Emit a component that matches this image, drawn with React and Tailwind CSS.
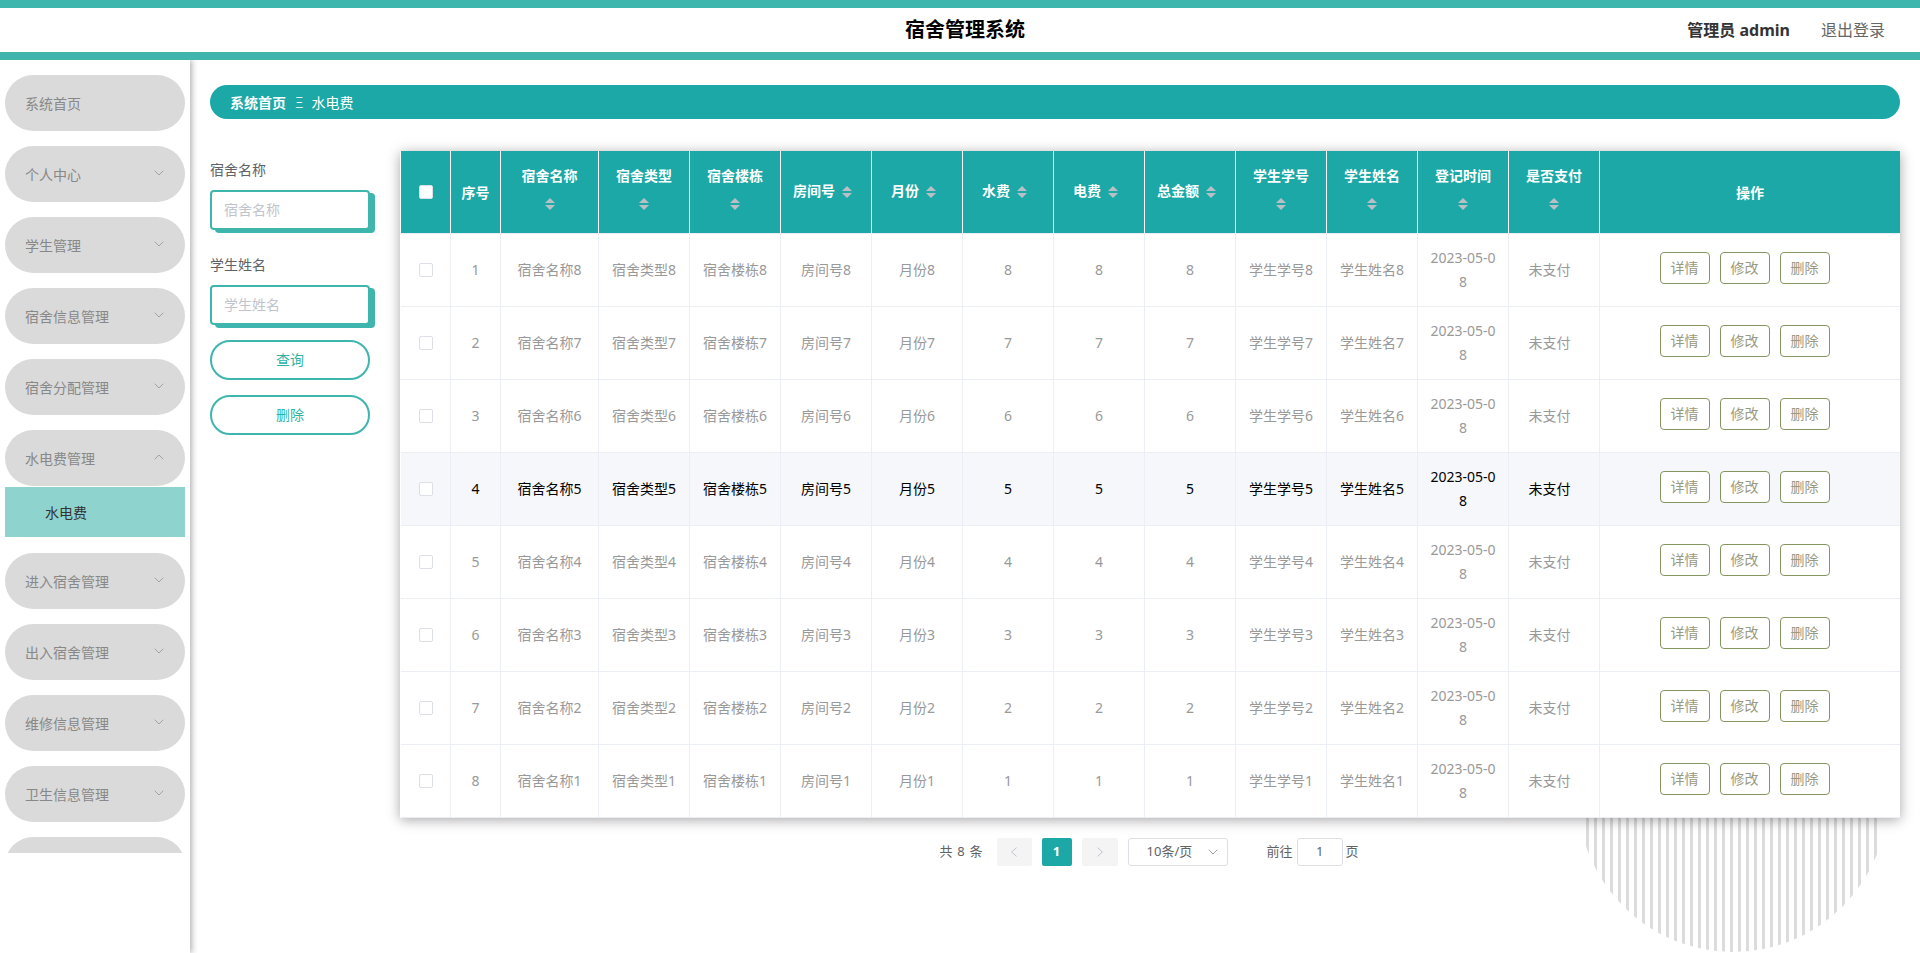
import React from "react";

const FONT = "font-['Noto_Sans','Noto_Sans_CJK_SC',sans-serif]";

function Chevron({ up, className = "" }) {
  return (
    <svg width="10" height="6" viewBox="0 0 10 6" fill="none" className={className}>
      <polyline points={up ? "0.7,5.3 5,1 9.3,5.3" : "0.7,0.7 5,5 9.3,0.7"} stroke="#a0a3a8" strokeWidth="1" />
    </svg>
  );
}

function MenuItem({ label, chevron, up }) {
  return (
    <div className="flex h-[56px] shrink-0 items-center justify-between rounded-[28px] bg-[#dadada] pl-[20px] pr-[21px] text-[14px] text-[#888888]">
      <span>{label}</span>
      {chevron && <Chevron up={up} className="mb-[3px]" />}
    </div>
  );
}

function Sidebar() {
  const before = ["个人中心", "学生管理", "宿舍信息管理", "宿舍分配管理"];
  const after = ["进入宿舍管理", "出入宿舍管理", "维修信息管理", "卫生信息管理"];
  return (
    <aside className="relative z-20 h-[893px] w-[190px] shrink-0 bg-white shadow-[2px_0_6px_rgba(0,0,0,0.3)]">
      <div className="flex h-[793px] flex-col gap-[15px] overflow-hidden px-[5px] pt-[15px]">
        <MenuItem label="系统首页" />
        {before.map((m) => (
          <MenuItem key={m} label={m} chevron />
        ))}
        <div className="mb-px shrink-0">
          <MenuItem label="水电费管理" chevron up />
          <div className="mt-px flex h-[50px] items-center bg-[#8fd3cf] pl-[40px] text-[14px] text-[#333333]">水电费</div>
        </div>
        {after.map((m) => (
          <MenuItem key={m} label={m} chevron />
        ))}
        <MenuItem label="" />
      </div>
    </aside>
  );
}

function Header() {
  return (
    <header className="relative z-30 flex h-[60px] items-center border-y-[8px] border-[#3eb5ad] bg-white">
      <div className="ml-[905px] text-[20px] font-bold leading-none text-black">宿舍管理系统</div>
      <div className="ml-auto mr-[35px] flex items-center gap-[31px] text-[16px]">
        <span className="font-bold text-[#333333]">管理员 admin</span>
        <span className="text-[#666666]">退出登录</span>
      </div>
    </header>
  );
}

function FormField({ label }) {
  return (
    <div className="mb-[15px]">
      <div className="h-[40px] text-[14px] leading-[40px] text-[#606266]">{label}</div>
      <div className="flex h-[40px] w-[160px] items-center rounded-[4px] border-2 border-[#3eb5ad] bg-white pb-[2px] pl-[12px] text-[14px] text-[#c0c4cc] shadow-[5px_3px_0_#3eb5ad]">
        {label}
      </div>
    </div>
  );
}

function Caret() {
  return (
    <span className="inline-flex h-[34px] w-[24px] flex-col items-center justify-center gap-[2px] align-middle">
      <span className="h-0 w-0 border-x-[5px] border-b-[5px] border-x-transparent border-b-[#b8bfc5]"></span>
      <span className="h-0 w-0 border-x-[5px] border-t-[5px] border-x-transparent border-t-[#b8bfc5]"></span>
    </span>
  );
}

const COLS = [
  ["宿舍名称", "宿舍名称", 98],
  ["宿舍类型", "宿舍类型", 91],
  ["宿舍楼栋", "宿舍楼栋", 91],
  ["房间号", "房间号", 91],
  ["月份", "月份", 91],
  ["水费", "", 91],
  ["电费", "", 91],
  ["总金额", "", 91],
  ["学生学号", "学生学号", 91],
  ["学生姓名", "学生姓名", 91],
];

function Table() {
  const rows = [8, 7, 6, 5, 4, 3, 2, 1];
  const th = "border-b border-r border-b-[#ebeef5] border-r-white px-[10px] text-center align-middle font-bold leading-[23px] text-white";
  const td = "h-[73px] border-b border-r border-[#ebeef5] px-[10px] text-center align-middle leading-[24px] break-all";
  return (
    <div className="bg-white pl-px shadow-[0_2px_12px_rgba(0,0,0,0.35)]">
      <table className="w-[1499px] table-fixed border-separate border-spacing-0 bg-white text-[14px]">
        <colgroup>
          <col className="w-[50px]" />
          <col className="w-[50px]" />
          {COLS.map(([h, , w]) => (
            <col key={h} style={{ width: w }} />
          ))}
          <col className="w-[91px]" />
          <col className="w-[91px]" />
          <col className="w-[300px]" />
        </colgroup>
        <thead>
          <tr className="h-[83px] bg-[#1ba8a6]">
            <th className={th}>
              <span className="mx-auto block h-[14px] w-[14px] rounded-[2px] border border-[#dcdfe6] bg-white"></span>
            </th>
            <th className={th + " px-0"}>序号</th>
            {COLS.map(([h]) => (
              <th key={h} className={th}>
                {h}
                <Caret />
              </th>
            ))}
            <th className={th}>
              登记时间
              <Caret />
            </th>
            <th className={th}>
              是否支付
              <Caret />
            </th>
            <th className={th + " border-r-0"}>操作</th>
          </tr>
        </thead>
        <tbody>
          {rows.map((n, i) => {
            const hover = i === 3;
            return (
              <tr key={n} className={hover ? "bg-[#f5f7fa] text-black" : "text-[#999999]"}>
                <td className={td}>
                  <span className="mx-auto block h-[14px] w-[14px] rounded-[2px] border border-[#dcdfe6] bg-white"></span>
                </td>
                <td className={td}>{i + 1}</td>
                {COLS.map(([h, prefix]) => (
                  <td key={h} className={td}>
                    {prefix}
                    {n}
                  </td>
                ))}
                <td className={td}>2023-05-08</td>
                <td className={td + " pr-[19px]"}>未支付</td>
                <td className={td + " border-r-0 pr-[21px]"}>
                  <div className="mb-[5px] flex justify-center gap-[10px]">
                    {["详情", "修改", "删除"].map((b) => (
                      <span
                        key={b}
                        className="flex h-[32px] w-[50px] items-center justify-center rounded-[4px] border border-[#84965f] bg-white text-[#9a9a80]"
                      >
                        {b}
                      </span>
                    ))}
                  </div>
                </td>
              </tr>
            );
          })}
        </tbody>
      </table>
    </div>
  );
}

function Arrow({ dir }) {
  return (
    <svg width="8" height="10" viewBox="0 0 8 10" fill="none">
      <polyline points={dir === "l" ? "6.5,0.7 1.5,5 6.5,9.3" : "1.5,0.7 6.5,5 1.5,9.3"} stroke="#c0c4cc" strokeWidth="1" />
    </svg>
  );
}

function Pagination() {
  return (
    <div className="mt-[20px] flex items-center justify-center pr-[2px] text-[13px] text-[#606266]">
      <span className="mr-[14px] whitespace-pre [word-spacing:1.5px]">共 8 条</span>
      <span className="flex h-[28px] w-[35px] items-center justify-center rounded-[2px] bg-[#f4f4f5]">
        <Arrow dir="l" />
      </span>
      <span className="mx-[10px] flex h-[28px] w-[30px] items-center justify-center rounded-[2px] bg-[#1ba8a6] font-bold text-white">1</span>
      <span className="flex h-[28px] w-[36px] items-center justify-center rounded-[2px] bg-[#f4f4f5]">
        <Arrow dir="r" />
      </span>
      <span className="ml-[10px] flex h-[28px] w-[100px] items-center justify-between rounded-[3px] border border-[#dcdfe6] bg-white pl-[18px] pr-[9px]">
        <span>10条/页</span>
        <Chevron />
      </span>
      <span className="ml-[39px]">前往</span>
      <span className="ml-[4px] mr-[3px] flex h-[28px] w-[46px] items-center justify-center rounded-[3px] border border-[#dcdfe6] bg-white">1</span>
      <span>页</span>
    </div>
  );
}

export default function App() {
  return (
    <div className={"relative h-[953px] w-full overflow-hidden bg-white " + FONT}>
      <div className="absolute left-[1584px] top-[642px] h-[310px] w-[294px] overflow-hidden">
        <div className="-ml-[6px] h-[310px] w-[310px] rounded-full bg-[repeating-linear-gradient(90deg,#dcdcdc_0,#dcdcdc_3px,transparent_3px,transparent_8px)]"></div>
      </div>
      <Header />
      <div className="relative flex">
        <Sidebar />
        <main className="relative z-10 min-w-0 flex-1 px-[20px]">
          <div className="mt-[25px] flex h-[34px] items-center rounded-[17px] bg-[#1ba8a6] pl-[20px] text-[14px] text-white">
            <span className="font-bold">系统首页</span>
            <span className="ml-[9px] mr-[8px] font-light">Ξ</span>
            <span>水电费</span>
          </div>
          <div className="mt-[31px] flex">
            <div className="w-[190px] shrink-0">
              <FormField label="宿舍名称" />
              <FormField label="学生姓名" />
              <div className="mb-[15px] flex h-[40px] w-[160px] items-center justify-center rounded-[20px] border-2 border-[#3eb5ad] pb-[2px] text-[14px] text-[#2bb3a9]">查询</div>
              <div className="flex h-[40px] w-[160px] items-center justify-center rounded-[20px] border-2 border-[#3eb5ad] pb-[2px] text-[14px] text-[#2bb3a9]">删除</div>
            </div>
            <div className="mt-px w-[1500px] shrink-0">
              <Table />
              <Pagination />
            </div>
          </div>
        </main>
      </div>
    </div>
  );
}
